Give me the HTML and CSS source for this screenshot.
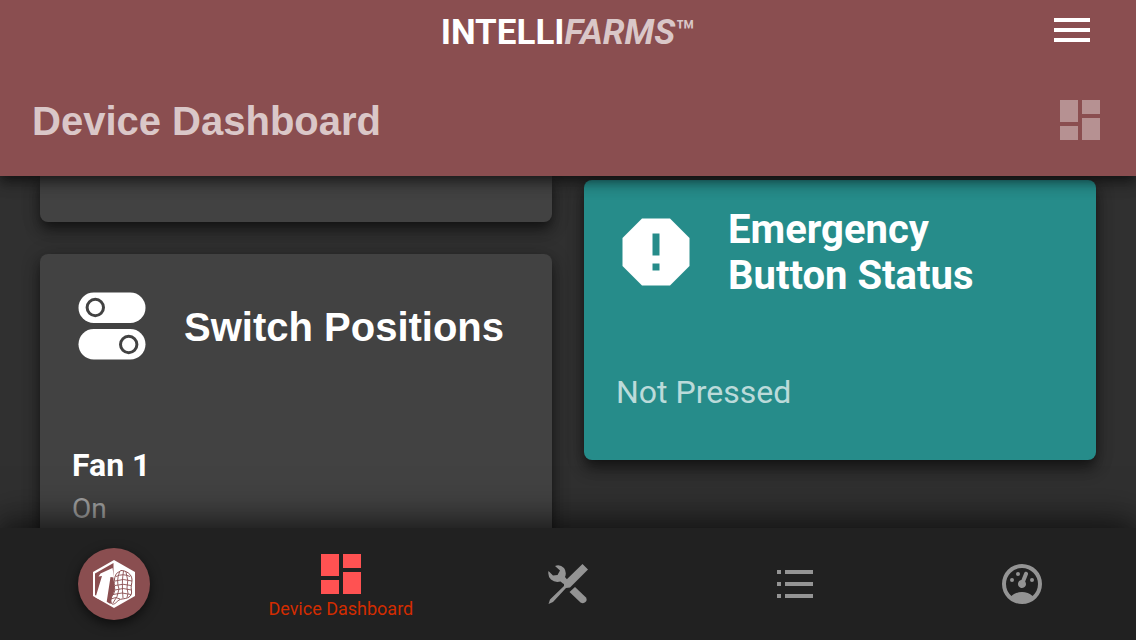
FILE: index.html
```html
<!DOCTYPE html>
<html lang="en">
<head>
<meta charset="utf-8">
<meta name="viewport" content="width=device-width, initial-scale=1">
<title>IntelliFarms - Device Dashboard</title>
<link rel="stylesheet" href="styles.css">
</head>
<body>
<header class="header">
  <div class="brandbar">
    <div class="brand"><span>INTELLI</span><span class="brand-soft"><em>FARMS</em><span class="tm">™</span></span></div>
    <button class="icon-button" type="button" aria-label="Menu">
      <svg width="48" height="48" viewBox="0 0 24 24" fill="currentColor"><path d="M3 18h18v-2H3v2zm0-5h18v-2H3v2zm0-7v2h18V6H3z"/></svg>
    </button>
  </div>
  <div class="titlebar">
    <h1 class="title">Device Dashboard</h1>
    <svg class="title-icon" width="40" height="40" viewBox="0 0 20 20" fill="currentColor" aria-hidden="true"><path d="M0 0h9v11H0zM11 0h9v7h-9zM0 13h9v7H0zM11 9h9v11h-9z"/></svg>
  </div>
</header>
<main class="board">
  <div class="column">
    <section class="card card-tail"></section>
    <section class="card">
      <div class="card-head">
        <svg class="card-icon" width="80" height="80" viewBox="0 0 80 80" aria-hidden="true">
          <g fill="#fff"><rect x="6.500" y="6.500" width="67" height="30.500" rx="15.250"/><rect x="6.500" y="43" width="67" height="30.500" rx="15.250"/></g>
          <g fill="none" stroke="#424242" stroke-width="3"><circle cx="23.300" cy="21.500" r="8.200"/><circle cx="56.700" cy="58.500" r="8.200"/></g>
        </svg>
        <h2 class="card-title card-title-plain">Switch Positions</h2>
      </div>
      <dl class="reading">
        <dt>Fan 1</dt>
        <dd>On</dd>
      </dl>
    </section>
  </div>
  <div class="column column-right">
    <section class="card card-teal">
      <div class="card-head">
        <svg class="card-icon" width="80" height="80" viewBox="0 0 80 80" aria-hidden="true">
          <path fill="#fff" fill-rule="evenodd" d="M26 6.500h28l19.500 19.500v28L54 73.500H26L6.500 54V26zM36.500 21.500v22h7V21.500zM36.500 51.500v7h7v-7z"/>
        </svg>
        <h2 class="card-title">Emergency Button Status</h2>
      </div>
      <p class="status">Not Pressed</p>
    </section>
  </div>
</main>
<nav class="nav">
  <a class="nav-item" href="#home" aria-label="Home">
    <span class="logo">
      <svg width="72" height="72" viewBox="0 0 72 72" aria-hidden="true">
        <path fill="#fff" d="M36 12L57 24V48L36 60L15 48V24z"/>
        <path fill="#8a4e50" d="M17 25.500L35.500 15V31L37 40L32.500 56L17 47z"/>
        <path fill="#fff" d="M34.500 20L36 29.500L32.500 29L28.500 55L17.500 49.500L24 28L20.500 28.500L22.500 25.500z"/>
        <path fill="#fff" stroke="#8a4e50" stroke-width="1" d="M43 22.500C48 22.500 54 26 54 32C54 36 52.500 38 53.500 43C54.500 49 49 50.500 44 51C39 51.500 38 57 34 56C32 54 33 49 35.500 46C38 42 35.500 37 36.500 31C37.500 26 39 24.500 41 24z"/>
        <path fill="none" stroke="#8a4e50" stroke-width="0.900" d="M38 28.500Q45 25 52 28.500M37 33Q45 30 54 33M37 37.500Q45 35 53 37.500M37 42Q45 39 53.500 42M35 46.500Q44 43.500 53 46.500M33 51Q38 48 42 51M41.500 24Q38 33 41 41Q40 49 35 55M45.500 23Q43.500 34 45 50M48 24Q51 33 49 40Q51 46 49 49.500"/>
      </svg>
    </span>
  </a>
  <a class="nav-item nav-active" href="#dashboard" aria-current="page">
    <svg width="40" height="40" viewBox="0 0 20 20" fill="#ff5252" aria-hidden="true"><path d="M0 0h9v11H0zM11 0h9v7h-9zM0 13h9v7H0zM11 9h9v11h-9z"/></svg>
    <span class="nav-label">Device Dashboard</span>
  </a>
  <a class="nav-item" href="#tools" aria-label="Tools">
    <svg width="40" height="40" viewBox="0 0 40 40" fill="currentColor" aria-hidden="true">
      <path d="M34.500 0L40 5.500L22 23.500L18 24L5 38L0.500 40L2 35.500L16 22L16 18z"/>
      <path d="M27 23L38 33.500Q39.500 36 37.500 38T32.500 38.500L21.500 28z"/>
      <path d="M7 2Q12 0 16 4Q19 8 17 13L19.500 16L15.500 20L12.500 17.500Q7 19 3 15.500Q-0.500 12 0.500 7L5 11.500L9.500 11L12 6.500z"/>
    </svg>
  </a>
  <a class="nav-item" href="#list" aria-label="List">
    <svg width="48" height="48" viewBox="0 0 24 24" fill="currentColor" aria-hidden="true"><path d="M3 5h2v2H3zM7 5h14v2H7zM3 11h2v2H3zM7 11h14v2H7zM3 17h2v2H3zM7 17h14v2H7z"/></svg>
  </a>
  <a class="nav-item" href="#gauge" aria-label="Gauge">
    <svg width="48" height="48" viewBox="0 0 24 24" fill="currentColor" aria-hidden="true"><path d="M12 2A10 10 0 0 0 2 12A10 10 0 0 0 12 22A10 10 0 0 0 22 12A10 10 0 0 0 12 2M12 4A8 8 0 0 1 20 12C20 14.400 19 16.500 17.300 18C15.900 16.700 14 16 12 16S8.200 16.700 6.700 18C5 16.500 4 14.400 4 12A8 8 0 0 1 12 4M14 5.890C13.620 5.900 13.260 6.150 13.100 6.540L11.810 9.770L11.710 10C11 10.130 10.410 10.600 10.140 11.260C9.730 12.290 10.230 13.450 11.260 13.860C12.290 14.270 13.450 13.770 13.860 12.740C14.120 12.080 14 11.320 13.570 10.760L13.670 10.500L14.960 7.290L14.970 7.260C15.170 6.750 14.920 6.170 14.410 5.960C14.280 5.910 14.150 5.890 14 5.890M10 6A1 1 0 0 0 9 7A1 1 0 0 0 10 8A1 1 0 0 0 11 7A1 1 0 0 0 10 6M7 9A1 1 0 0 0 6 10A1 1 0 0 0 7 11A1 1 0 0 0 8 10A1 1 0 0 0 7 9M17 9A1 1 0 0 0 16 10A1 1 0 0 0 17 11A1 1 0 0 0 18 10A1 1 0 0 0 17 9Z"/></svg>
  </a>
</nav>
</body>
</html>
```
FILE: styles.css
```css
* {
  box-sizing: border-box;
}

body {
  margin: 0;
  height: 100vh;
  display: flex;
  flex-direction: column;
  overflow: hidden;
  background: #303030;
  color: #fff;
  font-family: Roboto, sans-serif;
}

h1,
h2,
p,
dl,
dd {
  margin: 0;
}

.header {
  flex: none;
  z-index: 1;
  padding: 0 32px 32px;
  background: #8a4e50;
  box-shadow: 0 4px 8px -2px rgba(0, 0, 0, 0.3), 0 8px 12px rgba(0, 0, 0, 0.3), 0 2px 20px rgba(0, 0, 0, 0.24);
}

.brandbar {
  display: grid;
  grid-template-columns: 48px 1fr 48px;
  align-items: center;
  padding: 6px 8px 42px 0;
}

.brand {
  grid-column: 2;
  display: flex;
  justify-content: center;
  padding: 6px 0 0 8px;
  font-size: 35px;
  font-weight: 700;
  line-height: 42px;
}

.brand-soft {
  display: flex;
  color: rgba(255, 255, 255, 0.7);
}

.tm {
  font-size: 32px;
  font-weight: 500;
  line-height: 40px;
}

.icon-button {
  padding: 0;
  border: 0;
  background: none;
  color: inherit;
}

.icon-button svg,
.title-icon,
.card-icon {
  display: block;
  flex: none;
}

.titlebar {
  display: flex;
  align-items: center;
  justify-content: space-between;
  padding-right: 4px;
}

.title {
  padding-top: 2px;
  color: rgba(255, 255, 255, 0.7);
  font: 700 40px/46px "Liberation Sans", Arial, sans-serif;
}

.title-icon {
  color: rgba(255, 255, 255, 0.38);
}

.board {
  flex: 1;
  min-height: 0;
  display: grid;
  grid-template-columns: 1fr 1fr;
  gap: 32px;
  padding: 0 40px;
  overflow: hidden;
}

.column {
  display: flex;
  flex-direction: column;
  gap: 32px;
}

.column-right {
  padding-top: 4px;
}

.card {
  padding: 24px 32px 48px;
  border-radius: 8px;
  background: #424242;
  box-shadow: 0 6px 10px -2px rgba(0, 0, 0, 0.34), 0 10px 16px rgba(0, 0, 0, 0.3), 0 2px 20px rgba(0, 0, 0, 0.2);
}

.card-tail {
  padding: 23px;
  border-radius: 0 0 8px 8px;
}

.card-teal {
  background: #268c8a;
}

.card-head {
  display: flex;
  align-items: center;
  gap: 32px;
  min-height: 96px;
}

.card-title {
  max-width: 300px;
  padding-top: 2px;
  font-size: 40px;
  font-weight: 700;
  line-height: 46px;
}

.card-title-plain {
  max-width: none;
  font-family: "Liberation Sans", Arial, sans-serif;
}

.reading {
  padding-top: 70px;
}

.reading dt {
  font-size: 32px;
  font-weight: 700;
  line-height: 42px;
}

.reading dd {
  color: rgba(255, 255, 255, 0.5);
  font-size: 28px;
  line-height: 46px;
}

.status {
  padding-top: 72px;
  color: rgba(255, 255, 255, 0.7);
  font-size: 32px;
  line-height: 40px;
}

.nav {
  flex: none;
  z-index: 1;
  display: flex;
  height: 112px;
  background: #212121;
  box-shadow: 0 -8px 36px rgba(0, 0, 0, 0.5), 0 -4px 20px rgba(0, 0, 0, 0.24);
}

.nav-item {
  flex: 1;
  display: flex;
  flex-direction: column;
  align-items: center;
  justify-content: center;
  color: #949494;
  text-decoration: none;
}

.nav-active {
  padding-top: 4px;
  color: #d32c00;
}

.nav-label {
  padding-top: 6px;
  font-size: 18px;
  line-height: 18px;
  white-space: nowrap;
}

.logo {
  display: flex;
  border-radius: 50%;
  background: #8a4e50;
  box-shadow: 0 4px 12px rgba(0, 0, 0, 0.6);
}
```
